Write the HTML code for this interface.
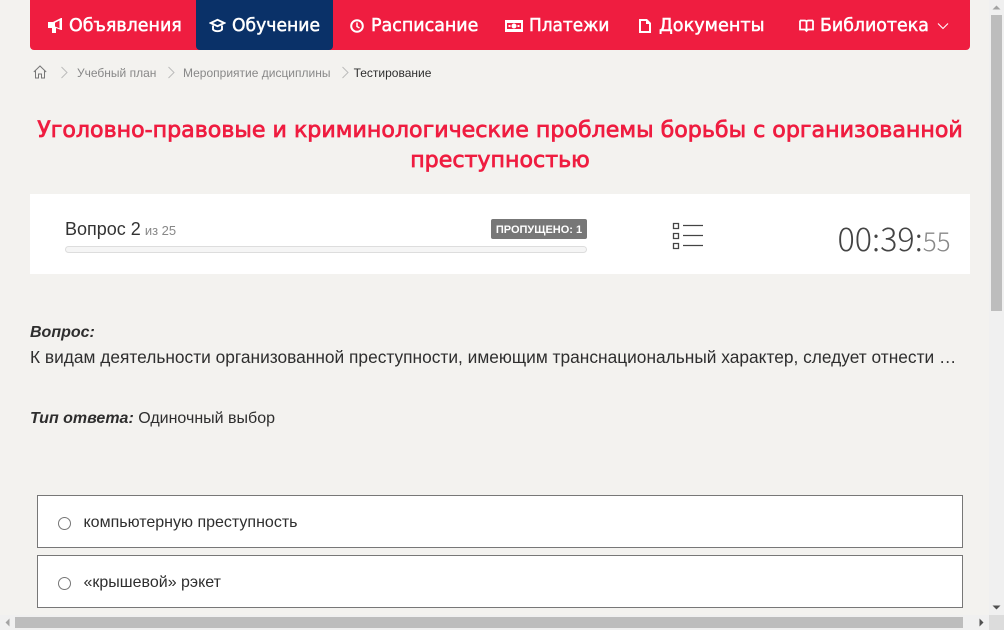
<!DOCTYPE html>
<html lang="ru"><head><meta charset="utf-8"><title>Тестирование</title>
<style>
html,body{margin:0;padding:0}
body{width:1004px;height:630px;overflow:hidden;position:relative;background:#f3f2ef;font-family:"Liberation Sans",sans-serif;color:#2e2e2e}
.a{position:absolute;white-space:nowrap}
.nav{font-family:"DejaVu Sans",sans-serif;font-size:18px;font-weight:400;color:#fff;top:14px;line-height:24px;-webkit-text-stroke:.5px #fff;transform-origin:left center}
.crumb{font-size:12px;line-height:14px;top:66px;color:#888}
.title{font-family:"DejaVu Sans",sans-serif;left:30px;width:940px;text-align:center;color:#ef1d40;font-size:22.150px;font-weight:400;-webkit-text-stroke:.75px #ef1d40;line-height:30px;white-space:nowrap}
.opt{position:absolute;left:37px;width:924px;height:51px;background:#fff;border:1px solid #777}
.opt i{position:absolute;left:20px;top:21px;width:11px;height:11px;border:1px solid #767676;border-radius:50%;background:#fff}
.opt span{position:absolute;left:45.500px;top:18px;font-size:16px;line-height:18px;color:#2e2e2e}
svg{position:absolute;display:block}
</style></head><body>
<div class="a" style="left:30px;top:0;width:940px;height:50px;background:#ef1d40;border-radius:0 0 4px 4px"></div>
<div class="a" style="left:196px;top:0;width:137px;height:50px;background:#0a3168;border-radius:0 0 4px 4px"></div>

<svg style="left:47px;top:18px" width="16" height="16" viewBox="0 0 16 16" fill="#fff"><path fill-rule="evenodd" d="M1 4h5l8-4h1v12h-1L9 10v5H5v-5H1zM8 4.800v3.700l4.500 1.800V2.500z"/></svg>
<div class="a nav" style="left:69px;transform:scaleX(.97)">Объявления</div>
<svg style="left:209px;top:17px" width="17" height="16" viewBox="0 0 17 16" fill="none" stroke="#fff" stroke-width="1.900"><path d="M1.800 6 8.500 2.800 15.200 6 8.500 9.200z"/><path d="M4 8.500v4c2 2.200 7 2.200 9 0v-4"/></svg>
<div class="a nav" style="left:232px;transform:scaleX(.955)">Обучение</div>
<svg style="left:350px;top:19px" width="14" height="14" viewBox="0 0 14 14" fill="none" stroke="#fff" stroke-width="2"><circle cx="7" cy="7" r="5.800"/><path d="M7 3.500V7.500L9.500 9" stroke-width="1.500"/></svg>
<div class="a nav" style="left:371px;transform:scaleX(.97)">Расписание</div>
<svg style="left:505px;top:20px" width="18" height="12" viewBox="0 0 18 12"><path fill="#fff" d="M0 0h18v12H0z"/><path fill="#ef1d40" d="M2 3h14v6H2z"/><circle cx="9" cy="6" r="2.500" fill="#fff"/><path fill="#fff" d="M3.500 5h2v2h-2zM12.500 5h2v2h-2z"/></svg>
<div class="a nav" style="left:529px;transform:scaleX(.94)">Платежи</div>
<svg style="left:639px;top:19px" width="12" height="14" viewBox="0 0 12 14" fill="#fff"><path fill-rule="evenodd" d="M0 0h8l4 4v10H0zM2 5v7h8V5H7V2H2z"/></svg>
<div class="a nav" style="left:659px;transform:scaleX(.98)">Документы</div>
<svg style="left:799px;top:19px" width="15" height="14" viewBox="0 0 15 14" fill="none" stroke="#fff" stroke-width="1.800"><path d="M1 1.500h4.500c1.200 0 2 .6 2 1.500v8.500M14 1.500H9.500c-1.200 0-2 .6-2 1.500M1 1.500v9h5l1.500 1.500L9 10.500h5v-9"/></svg>
<div class="a nav" style="left:820px;transform:scaleX(.965)">Библиотека</div>
<svg style="left:937px;top:22px" width="12" height="8" viewBox="0 0 12 8" fill="none" stroke="#fff" stroke-width="1.100"><path d="M1 1.500 6 6.500 11 1.500"/></svg>

<svg style="left:33px;top:65px" width="14" height="14" viewBox="0 0 14 14" fill="none" stroke="#777" stroke-width="1"><path d="M.8 7 7 1l6.200 6M2.500 5.500V13h3V9h3v4h3V5.500"/></svg>
<svg style="left:60px;top:66px" width="8" height="13" viewBox="0 0 8 13" fill="none" stroke="#bbb"><path d="M1.500 1 7 6.500 1.500 12"/></svg>
<div class="a crumb" style="left:77px">Учебный план</div>
<svg style="left:167px;top:66px" width="8" height="13" viewBox="0 0 8 13" fill="none" stroke="#bbb"><path d="M1.500 1 7 6.500 1.500 12"/></svg>
<div class="a crumb" style="left:183px">Мероприятие дисциплины</div>
<svg style="left:341px;top:66px" width="8" height="13" viewBox="0 0 8 13" fill="none" stroke="#bbb"><path d="M1.500 1 7 6.500 1.500 12"/></svg>
<div class="a crumb" style="left:353.600px;color:#2e2e2e">Тестирование</div>

<div class="a title" style="top:115px">Уголовно-правовые и криминологические проблемы борьбы с организованной</div>
<div class="a title" style="top:145px">преступностью</div>

<div class="a" style="left:30px;top:194px;width:940px;height:80px;background:#fff"></div>
<div class="a" style="left:65px;top:218px;font-size:18px;line-height:22px;color:#333">Вопрос 2 <span style="font-size:13px;color:#888;margin-left:-1px">из 25</span></div>
<div class="a" style="left:491px;top:219px;width:96px;height:20px;background:#777;border-radius:2px;color:#fff;font-size:11px;font-weight:700;line-height:22px;text-align:center">ПРОПУЩЕНО: 1</div>
<div class="a" style="left:65px;top:246px;width:520px;height:5px;background:#f5f5f5;border:1px solid #ddd;border-radius:4px"></div>
<svg style="left:672px;top:222px" width="32" height="29" viewBox="0 0 32 29" fill="none" stroke="#444"><path d="M1.500 1.500h5v5h-5zM1.500 11.500h5v5h-5zM1.500 21.500h5v5h-5z" stroke-width="1.300"/><path d="M11 3.500h20M11 13.500h20M11 23.500h20" stroke-width="1.200"/></svg>
<div class="a" style="left:837.500px;top:218px;font-family:'Noto Sans CJK JP',sans-serif;font-weight:300;font-size:32.300px;line-height:40px;color:#444">00:39:<span style="font-size:26px;color:#888">55</span></div>

<div class="a" style="left:30px;top:323px;font-size:16px;line-height:20px;font-weight:700;font-style:italic;color:#2e2e2e">Вопрос:</div>
<div class="a" style="left:30px;top:347px;font-size:17.330px;line-height:20px;color:#2e2e2e">К видам деятельности организованной преступности, имеющим транснациональный характер, следует отнести …</div>
<div class="a" style="left:30px;top:409px;font-size:16px;line-height:20px;color:#2e2e2e"><b><i>Тип ответа:</i></b> Одиночный выбор</div>

<div class="opt" style="top:495px"><i></i><span>компьютерную преступность</span></div>
<div class="opt" style="top:555px"><i></i><span>«крышевой» рэкет</span></div>

<div class="a" style="left:989px;top:0;width:15px;height:630px;background:#f0f0f0"></div>
<div class="a" style="left:0;top:615px;width:1004px;height:15px;background:#f0f0f0"></div>
<div class="a" style="left:989px;top:615px;width:15px;height:15px;background:#dcdcdc"></div>
<div class="a" style="left:991px;top:15px;width:11px;height:296px;background:#bdbdbd"></div>
<div class="a" style="left:15px;top:617px;width:948px;height:11px;background:#bdbdbd"></div>
<svg style="left:989px;top:0" width="15" height="15" viewBox="0 0 15 15" fill="#a3a3a3"><path d="M3.500 9.500 7.500 5.500 11.500 9.500z"/></svg>
<svg style="left:989px;top:600px" width="15" height="15" viewBox="0 0 15 15" fill="#505050"><path d="M3.500 5.500h8L7.500 9.500z"/></svg>
<svg style="left:0;top:615px" width="15" height="15" viewBox="0 0 15 15" fill="#a3a3a3"><path d="M9.500 3.500v8L5.500 7.500z"/></svg>
<svg style="left:974px;top:615px" width="15" height="15" viewBox="0 0 15 15" fill="#505050"><path d="M5.500 3.500v8L9.500 7.500z"/></svg>
</body></html>
